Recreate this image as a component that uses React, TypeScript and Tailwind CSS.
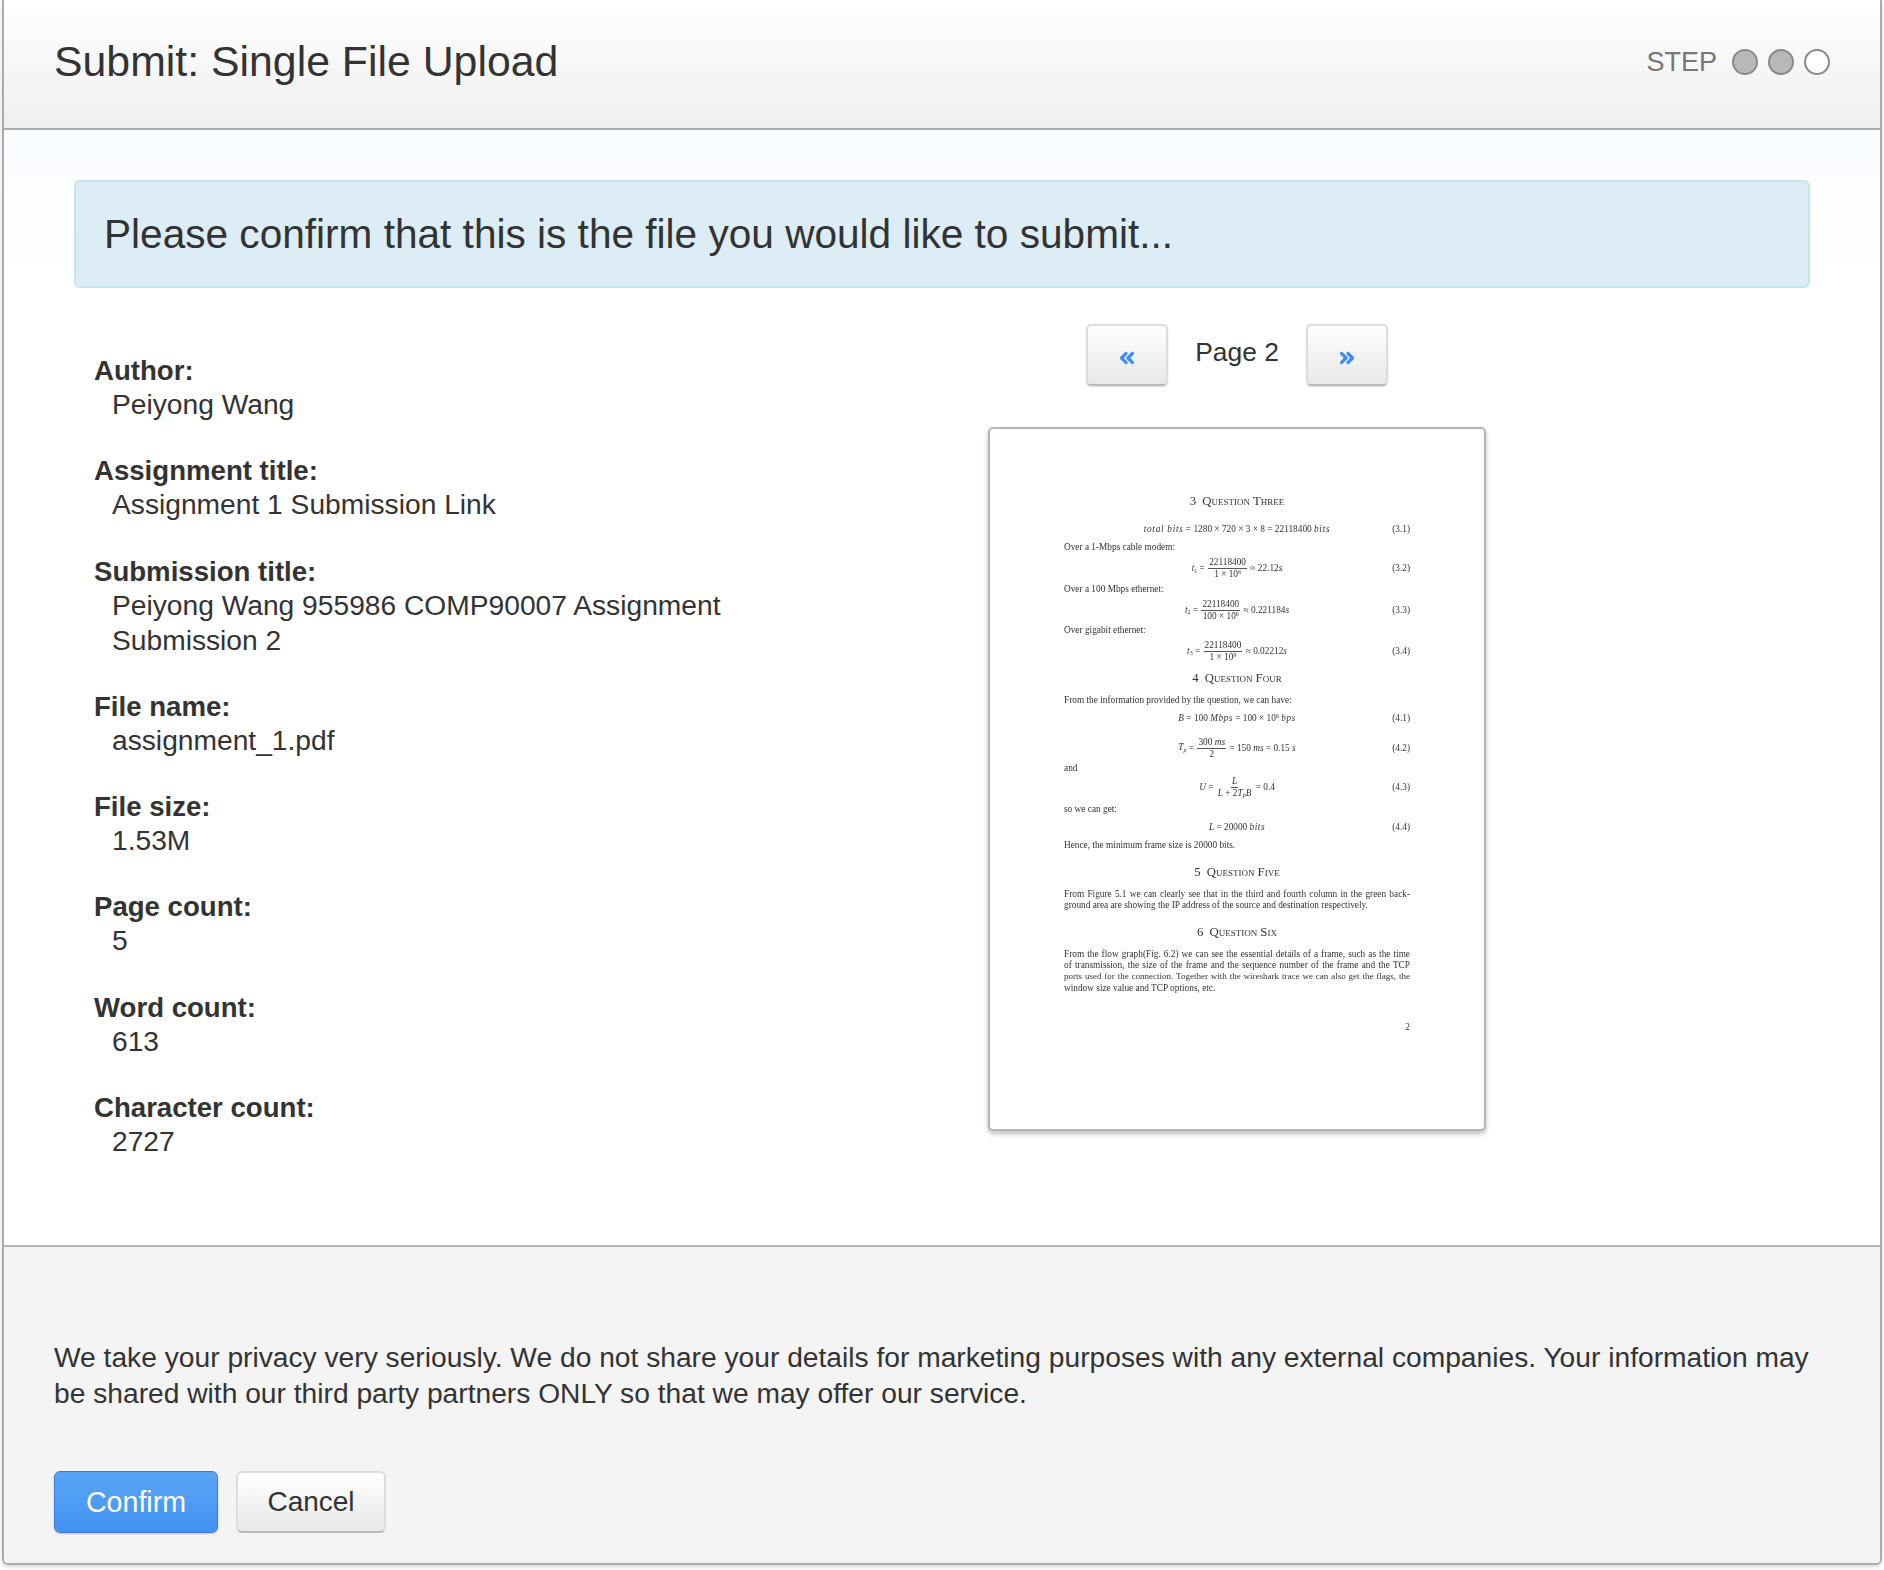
import { ChevronsLeft, ChevronsRight } from "lucide-react";
import type { ReactNode } from "react";

const details = [
  { label: "Author:", value: ["Peiyong Wang"] },
  { label: "Assignment title:", value: ["Assignment 1 Submission Link"] },
  { label: "Submission title:", value: ["Peiyong Wang 955986 COMP90007 Assignment", "Submission 2"] },
  { label: "File name:", value: ["assignment_1.pdf"] },
  { label: "File size:", value: ["1.53M"] },
  { label: "Page count:", value: ["5"] },
  { label: "Word count:", value: ["613"] },
  { label: "Character count:", value: ["2727"] },
];

function Heading({ n, children, className }: { n: string; children: ReactNode; className: string }) {
  return (
    <div className={`text-center text-[12.8px] leading-[12px] text-[#333] [font-variant:small-caps] ${className}`}>
      <span className="mr-[6px]">{n}</span>
      {children}
    </div>
  );
}

function Eq({ no, children, className }: { no: string; children: ReactNode; className: string }) {
  return (
    <div className={`flex items-center ${className}`}>
      <div className="w-[40px]" />
      <div className="flex-1 whitespace-nowrap text-center">{children}</div>
      <div className="w-[40px] text-right">{no}</div>
    </div>
  );
}

function Frac({ top, bottom }: { top: ReactNode; bottom: ReactNode }) {
  return (
    <span className="mx-[1px] inline-flex flex-col items-center align-middle">
      <span className="border-b border-[#555] px-[1px] leading-[11px]">{top}</span>
      <span className="px-[1px] leading-[11px]">{bottom}</span>
    </span>
  );
}

function PdfPage() {
  return (
    <div className="h-[704px] w-[498px] rounded-[5px] border-2 border-[#b5b5b5] bg-white px-[74px] pt-[66px] font-['Liberation_Serif',serif] text-[9.3px] leading-[11px] text-[#333] shadow-[0_3px_5px_rgba(0,0,0,0.25)]">
      <div className="blur-[0.3px]">
        <Heading n="3" className="">Question Three</Heading>
        <Eq no="(3.1)" className="mt-[16.7px] h-[11px]">
          <i className="tracking-[0.7px]">total bits</i> = 1280 × 720 × 3 × 8 = 22118400 <i className="tracking-[0.7px]">bits</i>
        </Eq>
        <div className="mt-[7.5px]">Over a 1-Mbps cable modem:</div>
        <Eq no="(3.2)" className="mt-[4.7px] h-[22px]">
          <i>t</i><sub className="text-[6px]">1</sub> = <Frac top="22118400" bottom={<>1 × 10<sup className="text-[6px]">6</sup></>} /> ≈ 22.12<i>s</i>
        </Eq>
        <div className="mt-[3.8px]">Over a 100 Mbps ethernet:</div>
        <Eq no="(3.3)" className="mt-[4.5px] h-[22px]">
          <i>t</i><sub className="text-[6px]">2</sub> = <Frac top="22118400" bottom={<>100 × 10<sup className="text-[6px]">6</sup></>} /> ≈ 0.221184<i>s</i>
        </Eq>
        <div className="mt-[3.5px]">Over gigabit ethernet:</div>
        <Eq no="(3.4)" className="mt-[4.5px] h-[22px]">
          <i>t</i><sub className="text-[6px]">3</sub> = <Frac top="22118400" bottom={<>1 × 10<sup className="text-[6px]">9</sup></>} /> ≈ 0.02212<i>s</i>
        </Eq>
        <Heading n="4" className="mt-[10px]">Question Four</Heading>
        <div className="mt-[10.5px]">From the information provided by the question, we can have:</div>
        <Eq no="(4.1)" className="mt-[7px] h-[11px]">
          <i>B</i> = 100 <i className="tracking-[0.5px]">Mbps</i> = 100 × 10<sup className="text-[6px]">6</sup> <i className="tracking-[0.5px]">bps</i>
        </Eq>
        <Eq no="(4.2)" className="mt-[13.5px] h-[22px]">
          <i>T<sub className="text-[6px]">p</sub></i> = <Frac top={<>300 <i>ms</i></>} bottom="2" /> = 150 <i>ms</i> = 0.15 <i>s</i>
        </Eq>
        <div className="mt-[3.5px]">and</div>
        <Eq no="(4.3)" className="mt-[2.5px] h-[22px]">
          <i>U</i> = <Frac top={<i>L</i>} bottom={<><i>L</i> + 2<i>T<sub className="text-[6px]">p</sub>B</i></>} /> = 0.4
        </Eq>
        <div className="mt-[5.5px]">so we can get:</div>
        <Eq no="(4.4)" className="mt-[7px] h-[11px]">
          <i>L</i> = 20000 <i className="tracking-[0.5px]">bits</i>
        </Eq>
        <div className="mt-[7px]">Hence, the minimum frame size is 20000 bits.</div>
        <Heading n="5" className="mt-[15.5px]">Question Five</Heading>
        <div className="mt-[10.5px]">
          <div className="[text-align-last:justify]">From Figure 5.1 we can clearly see that in the third and fourth column in the green back-</div>
          <div>ground area are showing the IP address of the source and destination respectively.</div>
        </div>
        <Heading n="6" className="mt-[15.5px]">Question Six</Heading>
        <div className="mt-[10.5px] leading-[11.4px]">
          <div className="[text-align-last:justify]">From the flow graph(Fig. 6.2) we can see the essential details of a frame, such as the time</div>
          <div className="[text-align-last:justify]">of transmission, the size of the frame and the sequence number of the frame and the TCP</div>
          <div className="text-[9px] [text-align-last:justify]">ports used for the connection. Together with the wireshark trace we can also get the flags, the</div>
          <div>window size value and TCP options, etc.</div>
        </div>
        <div className="mt-[27.5px] text-right">2</div>
      </div>
    </div>
  );
}

function PagerButton({ children }: { children: ReactNode }) {
  return (
    <button className="flex h-[62px] w-[82px] items-center justify-center rounded-[5px] border-2 border-[#ddd] border-b-[#bbb] bg-gradient-to-b from-white to-[#e8e8e8] pt-[6px] text-[#3b8df5] shadow-[0_1px_2px_rgba(0,0,0,0.15)]">
      {children}
    </button>
  );
}

export default function App() {
  return (
    <div className="min-h-[1570px] bg-white px-[2px] pb-[5px] font-['Liberation_Sans',Arial,sans-serif] text-[#333]">
      <div className="overflow-hidden rounded-b-[6px] border-x-2 border-b-2 border-[#ababab] shadow-[0_2px_4px_rgba(0,0,0,0.15)]">
        {/* Header */}
        <header className="flex h-[130px] items-center justify-between border-b-2 border-[#ababab] bg-gradient-to-b from-white to-[#efefef] px-[50px] pb-[4px]">
          <h1 className="mb-[2px] text-[42.8px] leading-none">Submit: Single File Upload</h1>
          <div className="flex items-center gap-[10px] text-[#777]">
            <span className="mr-[5px] text-[27px] leading-none">STEP</span>
            <span className="h-[26px] w-[26px] rounded-full border-2 border-[#8a8a8a] bg-[#b8b8b8]" />
            <span className="h-[26px] w-[26px] rounded-full border-2 border-[#8a8a8a] bg-[#b8b8b8]" />
            <span className="h-[26px] w-[26px] rounded-full border-2 border-[#8a8a8a] bg-white" />
          </div>
        </header>

        {/* Body */}
        <main className="h-[1115px] bg-gradient-to-b from-[#f9fcff] to-white to-[15%] px-[70px] pt-[50px]">
          <div className="flex h-[108px] items-center rounded-[6px] border-2 border-[#c3e5f0] bg-[#dcedf5] px-[28px] text-[40.6px] leading-none">
            Please confirm that this is the file you would like to submit...
          </div>
          <div className="flex">
            <div className="w-[914px] pl-[20px] pt-[65px] text-[28.2px] leading-[35px]">
              {details.map((d) => (
                <div key={d.label} className="mb-[31.3px]">
                  <div className="mb-[-1px] text-[27.6px] font-bold">{d.label}</div>
                  {d.value.map((v) => (
                    <div key={v} className="pl-[18px]">{v}</div>
                  ))}
                </div>
              ))}
            </div>
            <div className="flex w-[498px] flex-col items-center pt-[36px]">
              <div className="mb-[41px] flex items-start">
                <PagerButton><ChevronsLeft size={22} strokeWidth={3.5} /></PagerButton>
                <span className="w-[138px] pt-[11px] text-center text-[26.4px] leading-[35px]">Page 2</span>
                <PagerButton><ChevronsRight size={22} strokeWidth={3.5} /></PagerButton>
              </div>
              <PdfPage />
            </div>
          </div>
        </main>

        {/* Footer */}
        <footer className="h-[318px] border-t-2 border-[#b5b5b5] bg-[#f4f4f4] px-[50px] pt-[92px]">
          <p className="text-[28.2px] leading-[36px]">
            We take your privacy very seriously. We do not share your details for marketing purposes with any external companies. Your information may be shared with our third party partners ONLY so that we may offer our service.
          </p>
          <div className="mt-[60px] flex gap-[18px]">
            <button className="h-[62px] w-[164px] rounded-[6px] border border-[#3a7fd5] bg-gradient-to-b from-[#5aa6f5] to-[#4292f3] text-[28.6px] text-white shadow-[0_1px_2px_rgba(0,0,0,0.2)]">
              Confirm
            </button>
            <button className="h-[62px] w-[150px] rounded-[6px] border-2 border-[#ddd] border-b-[#bbb] bg-gradient-to-b from-white to-[#e8e8e8] text-[28px] text-[#333]">
              Cancel
            </button>
          </div>
        </footer>
      </div>
    </div>
  );
}
